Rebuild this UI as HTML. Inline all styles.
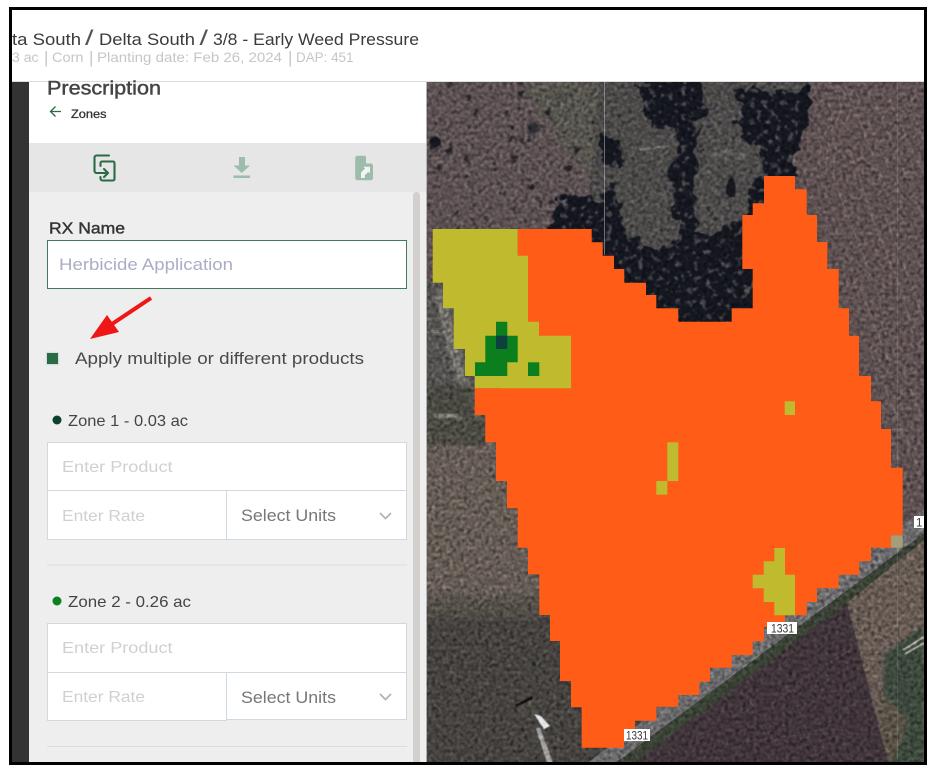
<!DOCTYPE html>
<html lang="en">
<head>
<meta charset="utf-8">
<title>Prescription</title>
<style>
html,body{margin:0;padding:0;width:951px;height:766px;overflow:hidden;background:#fff}
#frame{position:absolute;left:9px;top:7px;width:918px;height:758px;background:#000}
.a{position:absolute}
.box{position:absolute;background:#fff;border:1px solid #cfd9e1;box-sizing:border-box}
svg{position:absolute;left:0;top:0}
text{font-family:"Liberation Sans",sans-serif}
</style>
</head>
<body>
<div id="frame"></div>

<svg width="951" height="766" viewBox="0 0 951 766" style="left:0;top:0">
<defs>
<filter id="grain" x="0" y="0" width="100%" height="100%" color-interpolation-filters="sRGB">
<feTurbulence type="fractalNoise" baseFrequency="0.28" numOctaves="2" seed="9"/>
<feColorMatrix values=".33 .33 .33 0 0 .33 .33 .33 0 0 .33 .33 .33 0 0 0 0 0 0 1"/>
<feComponentTransfer><feFuncR type="linear" slope="2" intercept="-.5"/><feFuncG type="linear" slope="2" intercept="-.5"/><feFuncB type="linear" slope="2" intercept="-.5"/></feComponentTransfer>
<feGaussianBlur stdDeviation=".5"/>
</filter>
<filter id="spots" x="0" y="0" width="100%" height="100%" color-interpolation-filters="sRGB">
<feTurbulence type="fractalNoise" baseFrequency="0.11" numOctaves="2" seed="14"/>
<feColorMatrix values="0 0 0 0 .09  0 0 0 0 .09  0 0 0 0 .12  9 0 0 0 -6"/>
<feGaussianBlur stdDeviation=".7"/>
</filter>
<filter id="lights" x="0" y="0" width="100%" height="100%" color-interpolation-filters="sRGB">
<feTurbulence type="fractalNoise" baseFrequency="0.16" numOctaves="2" seed="21"/>
<feColorMatrix values="0 0 0 0 .36  0 0 0 0 .35  0 0 0 0 .36  8 0 0 0 -4.6"/>
<feGaussianBlur stdDeviation=".7"/>
</filter>
<filter id="rough" x="-15%" y="-15%" width="130%" height="130%" color-interpolation-filters="sRGB">
<feTurbulence type="fractalNoise" baseFrequency="0.06" numOctaves="3" seed="3" result="t"/>
<feDisplacementMap in="SourceGraphic" in2="t" scale="24" xChannelSelector="R" yChannelSelector="G"/>
<feGaussianBlur stdDeviation=".6"/>
</filter>
<filter id="b1"><feGaussianBlur stdDeviation="1.6"/></filter>
<filter id="b3"><feGaussianBlur stdDeviation="5"/></filter>
<filter id="bs"><feGaussianBlur stdDeviation=".6"/></filter>
<filter id="soft"><feGaussianBlur stdDeviation="0.3"/></filter>
<clipPath id="mapclip"><rect x="426" y="82" width="498" height="680"/></clipPath>
<clipPath id="scrubclip"><path d="M426 82H640V230H426Z"/></clipPath>
<clipPath id="treeclip"><path d="M548 229Q552 195 590 190 612 170 640 85H806L790 178 745 270 752 322H680L620 285 590 240Z"/></clipPath>
</defs>

<!-- MAP -->
<g clip-path="url(#mapclip)">
<rect x="426" y="82" width="498" height="680" fill="#5d5253"/>
<path d="M520 82H650V170L600 185 560 140Z" fill="#595650" filter="url(#b3)"/>
<rect x="426" y="82" width="230" height="150" clip-path="url(#scrubclip)" filter="url(#spots)" opacity=".85"/>
<!-- left strip -->
<path d="M426 280H480V430H426Z" fill="#565452"/>
<path d="M441 285L472 395 466 410 448 350 436 300Z" fill="#83807a" filter="url(#b1)" opacity=".7"/>
<path d="M426 330H453V333H426Z" fill="#7a776f" opacity=".5"/>
<path d="M426 385H472V420H426Z" fill="#4a4843" filter="url(#b1)"/>
<path d="M432 414H458L464 420H434Z" fill="#8d887c" filter="url(#b1)"/>
<!-- lower left field -->
<path d="M426 418H600V606H426Z" fill="#665d56"/>
<path d="M426 418H486V445H426Z" fill="#4b4b42" filter="url(#b1)"/>
<path d="M426 607H640V762H426Z" fill="#464340"/>
<path d="M426 596H580V618H426Z" fill="#55504a" filter="url(#b3)"/>
<!-- right field -->
<path d="M812 82H924V540H780V200L792 150 800 115Z" fill="#5e5152"/>
<g fill="none" stroke="#85797a" stroke-width="1.100" opacity=".5" filter="url(#bs)">
<path d="M830 85Q846 100 838 118 826 135 826 175"/>
<path d="M838 85Q856 105 846 122 832 140 834 180"/>
<path d="M822 95Q836 110 830 125 818 140 820 170"/>
<path d="M845 85L885 185"/><path d="M855 90L900 195"/><path d="M868 85L924 220"/>
<path d="M885 90L924 175"/><path d="M900 85L924 140"/><path d="M850 150L880 240"/>
<path d="M838 190L880 300"/><path d="M865 200L905 300"/><path d="M885 215L924 320"/>
<path d="M845 250L892 370"/><path d="M880 320L924 420"/><path d="M900 295L924 350"/>
<path d="M870 350L905 440"/><path d="M890 400L924 480"/>
</g>
<path d="M812 82Q798 118 793 140 788 165 795 178" fill="none" stroke="#7f7875" stroke-width="5" opacity=".5" filter="url(#b1)"/>
<!-- wooded area -->
<path d="M600 82H812L796 140 790 178 752 322H620L590 240V180Z" fill="#4c4a49"/>
<g fill="#14161f" filter="url(#rough)">
<path d="M548 235Q550 205 572 194 590 190 598 200L604 245Z"/>
<path d="M590 245L600 200 612 185 628 235 662 248 690 232 735 232 750 190 770 145 742 135 745 95 815 85 802 140 790 180 750 280 760 330H680L620 295Z"/>
<path d="M635 82H705V118L685 126 650 128Z"/>
<path d="M600 130L625 140 618 168 603 165Z"/>
<path d="M672 125L700 125 694 232 676 238Z"/>
<path d="M738 90H812L795 178 770 174 758 150 740 140Z"/>
<path d="M735 225L755 225 750 322 700 322 690 245Z"/>
</g>
<rect x="560" y="85" width="250" height="240" clip-path="url(#treeclip)" filter="url(#lights)" opacity=".75"/>
<path d="M732 176Q737 184 735 196 729 200 726 192 726 182 732 176Z" fill="#12131c" filter="url(#bs)"/>
<path d="M712 155L735 150 745 160" stroke="#8d8a82" stroke-width="4" fill="none" opacity=".4" filter="url(#b1)"/>
<path d="M639 150L668 146" stroke="#a5a297" stroke-width="2.500" fill="none" opacity=".5" filter="url(#bs)"/>
<circle cx="435" cy="142" r="5.500" fill="#14141b" filter="url(#bs)"/>
<circle cx="533" cy="128" r="6" fill="#2a2a30" filter="url(#b1)"/>
<!-- road and fields, lower right -->
<path d="M924 509V540L612 770H578Z" fill="#6c6c6e"/>
<path d="M924 533V548L632 770H606Z" fill="#3b4337"/>
<path d="M847 603L924 540V770H884Z" fill="#685c55"/>
<path d="M884 655L924 625V770H884Z" fill="#3d4a3e" filter="url(#b1)"/>
<path d="M880 695Q895 700 908 722L893 762H884Z" fill="#5a5247" filter="url(#b1)"/>
<path d="M903 650L924 637M905 654L924 643" stroke="#bdb9ad" stroke-width="1.800" filter="url(#bs)"/>
<path d="M847 603L890 770H625Z" fill="#40353b" filter="url(#bs)"/>
<g stroke="#52474d" stroke-width="1" fill="none" opacity=".55">
<path d="M770 660Q800 700 820 770"/><path d="M740 690Q770 720 780 770"/><path d="M810 630Q835 690 850 770"/><path d="M690 740Q770 700 850 650"/><path d="M760 740Q820 730 885 735"/>
</g>
<!-- house, drive -->
<path d="M540 727L553 763H547L536 729Z" fill="#a3a3a1" filter="url(#bs)"/>
<path d="M534 714L541 716 550 726 544 729Z" fill="#e6e8ea" filter="url(#bs)"/>
<path d="M517 702L533 699 537 713 523 717Z" fill="#4d4845" filter="url(#bs)"/>
<path d="M515 705L532 696 533 699 516 707Z" fill="#141414"/>
<circle cx="534" cy="664" r="2.500" fill="#2a2a2a" filter="url(#bs)"/>
<!-- grain -->
<rect x="426" y="82" width="498" height="680" filter="url(#grain)" style="mix-blend-mode:overlay" opacity=".55"/>
<!-- thin vertical seams -->
<path d="M604.500 82V255" stroke="#c4c4cc" stroke-opacity=".5" stroke-width="1"/>
<path d="M897.500 82V762" stroke="#fff" stroke-opacity=".1" stroke-width="1"/>
<path d="M426.500 82V762" stroke="#ddd" stroke-opacity=".7" stroke-width="1"/>

<!-- orange zone -->
<path fill="#ff5c18" d="M517.700 229H591.700V242.300H602.700V255.700H614V269H624.300V282.700H646V295H656.300V308.300H678.300V321.700H731.700V308.300H752.700V269H742.300V215H752.700V203.300H764V176H795V189.300H806.700V215H817V242H827.300V269H838.700V308.300H849V335.700H859V376H871V401.300H881V429H891V467.700H902.700V535.300H891V547.700H871V561.300H859.300V574.700H838.700V588.300H817V602H806.700V615.300H785V627.300H764V641.300H752.700V655H731.700V667.700H710V681.700H699.300V695H678.300V706.700H656.300V720.700H635V734H624V747.700H581.700V707.300H571V681H560V641H550V615H539.300V574.300H528V547.700H517.700V508.300H507V481H496V442.300H485.300V415H474.700V388.300H500V300H517.700Z"/>
<path fill="#a69e78" d="M891 535.300H902.700V547.700H891Z"/>
<!-- yellow zone -->
<path fill="#bfba2e" d="M432.700 229H517.700V255.700H528V321.700H539V335.700H571V388.300H474.700V376H465V349H453.700V308.300H443V282.700H432.700Z"/>
<g fill="#bfba2e">
<rect x="784.700" y="401.300" width="10.300" height="13.700"/>
<rect x="667.300" y="442.300" width="11" height="38.700"/>
<rect x="656.300" y="481" width="11" height="13.700"/>
<path d="M774.300 548H785V574.700H795V615.300H774.300V602H763.700V588.300H752.700V574.700H763.700V561.300H774.300Z"/>
</g>
<!-- green zone -->
<path fill="#0b7f1e" d="M496 321.700H507.300V335.700H517.700V362.300H507.300V376H475V362.300H485.300V335.700H496Z"/>
<rect x="528" y="362.300" width="11.300" height="13.700" fill="#0b7f1e"/>
<rect x="496" y="335.700" width="11.300" height="13.300" fill="#0f4040"/>

<!-- road shields -->
<rect x="624" y="729" width="26" height="12" fill="#fff"/>
<text x="626" y="739.500" font-size="11.500" fill="#333" textLength="22" lengthAdjust="spacingAndGlyphs">1331</text>
<rect x="767" y="622" width="30" height="12" fill="#fff"/>
<text x="771" y="632.500" font-size="11.500" fill="#333" textLength="23" lengthAdjust="spacingAndGlyphs">1331</text>
<rect x="914" y="516" width="10" height="12" fill="#fff"/>
<text x="916" y="526.500" font-size="11.500" fill="#333">1</text>
</g>
</svg>

<!-- Header -->
<div class="a" style="left:12px;top:10px;width:912px;height:71px;background:#fff"></div>
<div class="a" style="left:12px;top:81px;width:912px;height:1px;background:#dcdcdc"></div>
<!-- Left rail -->
<div class="a" style="left:12px;top:82px;width:17px;height:680px;background:#333"></div>
<!-- Panel -->
<div class="a" style="left:29px;top:82px;width:397px;height:61px;background:#fff"></div>
<div class="a" style="left:29px;top:143px;width:397px;height:49px;background:#e6e6e6"></div>
<div class="a" style="left:29px;top:192px;width:397px;height:570px;background:#eee"></div>
<div class="a" style="left:413px;top:192px;width:7px;height:570px;background:#d2cfcf;border-radius:4px 4px 0 0"></div>

<!-- Form boxes -->
<div class="box" style="left:47px;top:240px;width:360px;height:48.500px;border-color:#3f7a5a"></div>
<div class="a" style="left:47px;top:353px;width:11px;height:11px;background:#2a6b47;box-shadow:0 0 1px 1px #d5d9d6"></div>

<div class="box" style="left:47px;top:442px;width:360px;height:49px"></div>
<div class="box" style="left:47px;top:490px;width:180px;height:50px"></div>
<div class="box" style="left:226px;top:490px;width:181px;height:50px"></div>

<div class="a" style="left:47px;top:564px;width:360px;height:2px;background:#e5e5e5"></div>

<div class="box" style="left:47px;top:623px;width:360px;height:50px"></div>
<div class="box" style="left:47px;top:672px;width:180px;height:49px"></div>
<div class="box" style="left:226px;top:672px;width:181px;height:48px"></div>

<div class="a" style="left:47px;top:746px;width:360px;height:1px;background:#dcdcdc"></div>

<!-- Text and icons -->
<svg width="951" height="766" viewBox="0 0 951 766">
<g filter="url(#soft)">
<g fill="#3a3a3a" font-size="16.500">
<text x="12" y="45" textLength="69" lengthAdjust="spacingAndGlyphs">ta South</text>
<text x="85" y="45" font-size="21" fill="#555" textLength="8.500" lengthAdjust="spacingAndGlyphs">/</text>
<text x="99" y="45" textLength="96" lengthAdjust="spacingAndGlyphs">Delta South</text>
<text x="199.500" y="45" font-size="21" fill="#555" textLength="8.500" lengthAdjust="spacingAndGlyphs">/</text>
<text x="213" y="45" textLength="206" lengthAdjust="spacingAndGlyphs">3/8 - Early Weed Pressure</text>
</g>
<g fill="#c6c6c6" font-size="14">
<text x="12" y="62" textLength="26.500" lengthAdjust="spacingAndGlyphs">3 ac</text>
<text x="44" y="63" font-size="17">|</text>
<text x="52" y="62" textLength="31.500" lengthAdjust="spacingAndGlyphs">Corn</text>
<text x="89" y="63" font-size="17">|</text>
<text x="97" y="62" textLength="185" lengthAdjust="spacingAndGlyphs">Planting date: Feb 26, 2024</text>
<text x="288" y="63" font-size="17">|</text>
<text x="296" y="62" textLength="57.500" lengthAdjust="spacingAndGlyphs">DAP: 451</text>
</g>
<text x="47" y="94.500" font-size="19.500" fill="#444" stroke="#444" stroke-width=".45" textLength="114" lengthAdjust="spacingAndGlyphs">Prescription</text>
<path d="M61 111.500H51M55.500 106.500L50.500 111.500 55.500 116.500" fill="none" stroke="#2a6b47" stroke-width="1.300"/>
<text x="71" y="118" font-size="11.500" fill="#333" stroke="#333" stroke-width=".3" textLength="35.500" lengthAdjust="spacingAndGlyphs">Zones</text>

<!-- copy icon -->
<g fill="none" stroke="#2a6b47" stroke-width="2.100" stroke-linecap="round" stroke-linejoin="round">
<path d="M109 155.500H96.500a2 2 0 0 0-2 2V171a2 2 0 0 0 2 2H107"/>
<path d="M100.500 166V163a1.500 1.500 0 0 1 1.500-1.500H113a1.500 1.500 0 0 1 1.500 1.500V179a1.500 1.500 0 0 1-1.500 1.500H102.500a2 2 0 0 1-2-2V177"/>
<path d="M104 169L108 173 104 177"/>
</g>
<!-- download icon -->
<path fill="#9dbcab" d="M239 157H245V165.500H250L241.800 173 233.500 165.500H239ZM233.500 175.500H250V178H233.500Z"/>
<!-- file icon -->
<path fill="#9dbcab" d="M357.500 155.700H365L373 165V178a2.300 2.300 0 0 1-2.300 2.300H357.500a2.300 2.300 0 0 1-2.300-2.300V158a2.300 2.300 0 0 1 2.300-2.300Z"/>
<path fill="#e6e6e6" d="M366 155.700L373 163.500H366Z"/>
<path fill="#f2f5f3" d="M361 178V172.500L365 168.500 363.300 166.800H370V173.500L368.300 171.800 364.800 175.300V178Z"/>

<text x="49" y="233.500" font-size="16" fill="#333" stroke="#333" stroke-width=".4" textLength="76" lengthAdjust="spacingAndGlyphs">RX Name</text>
<text x="59" y="270" font-size="16.500" fill="#a9adc5" textLength="174" lengthAdjust="spacingAndGlyphs">Herbicide Application</text>

<!-- red arrow -->
<path d="M151 298L109 326" stroke="#f01414" stroke-width="4" fill="none"/>
<path d="M90 339L107 315 119 332Z" fill="#f01414"/>

<text x="75" y="364" font-size="16.500" fill="#4a4a4a" textLength="289" lengthAdjust="spacingAndGlyphs">Apply multiple or different products</text>

<circle cx="57" cy="420" r="4.500" fill="#0f4030"/>
<text x="68" y="426" font-size="16" fill="#444" textLength="120" lengthAdjust="spacingAndGlyphs">Zone 1 - 0.03 ac</text>
<g font-size="16" fill="#d0d0d0">
<text x="62" y="472" textLength="110.500" lengthAdjust="spacingAndGlyphs">Enter Product</text>
<text x="62" y="521" textLength="83" lengthAdjust="spacingAndGlyphs">Enter Rate</text>
<text x="62" y="653" textLength="110.500" lengthAdjust="spacingAndGlyphs">Enter Product</text>
<text x="62" y="702" textLength="83" lengthAdjust="spacingAndGlyphs">Enter Rate</text>
</g>
<g font-size="16.500" fill="#777">
<text x="241" y="521" textLength="95" lengthAdjust="spacingAndGlyphs">Select Units</text>
<text x="241" y="703" textLength="95" lengthAdjust="spacingAndGlyphs">Select Units</text>
</g>
<path d="M380 513L385.500 518.500 391 513M380 694L385.500 699.500 391 694" fill="none" stroke="#b4b4b4" stroke-width="1.800"/>

<circle cx="57" cy="601" r="4.500" fill="#0b7f1e"/>
<text x="68" y="607" font-size="16" fill="#444" textLength="123" lengthAdjust="spacingAndGlyphs">Zone 2 - 0.26 ac</text>
</g>
</svg>
</body>
</html>
